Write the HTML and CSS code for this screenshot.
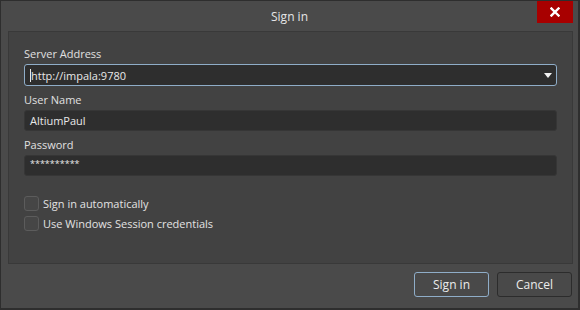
FILE: index.html
```html
<!DOCTYPE html>
<html>
<head>
<meta charset="utf-8">
<link rel="stylesheet" href="styles.css">
</head>
<body>
<div class="window">
  <div class="titlebar">
    <div class="title">Sign in</div>
    <div class="close">
      <svg width="10" height="10" viewBox="0 0 10 10"><path d="M1.5 1.5 L8.5 8.5 M8.5 1.5 L1.5 8.5" stroke="#fff" stroke-width="2.4" stroke-linecap="square"/></svg>
    </div>
  </div>
  <div class="panel">
    <div class="label first">Server Address</div>
    <div class="field combo"><span class="caret"></span><span>http://impala:9780</span><span class="arrow"></span></div>
    <div class="label">User Name</div>
    <div class="field">AltiumPaul</div>
    <div class="label">Password</div>
    <div class="field pwd">**********</div>
    <div class="checks">
      <div class="check"><span class="box"></span><span>Sign in automatically</span></div>
      <div class="check"><span class="box"></span><span>Use Windows Session credentials</span></div>
    </div>
  </div>
  <div class="footer">
    <div class="btn primary">Sign in</div>
    <div class="btn">Cancel</div>
  </div>
</div>
</body>
</html>
```
FILE: styles.css
```css
html, body { margin: 0; padding: 0; background: #2a2a2a; }
body { font-family: "Open Sans", "Noto Sans", sans-serif; font-size: 11px; color: #e2e2e2; }
.window {
  width: 580px; height: 310px; box-sizing: border-box;
  background: #4a4a4a;
  border: 1px solid #2e2e2e;
  border-bottom-width: 2px;
  border-right-width: 2px;
  display: flex; flex-direction: column;
}
.titlebar {
  height: 30px; display: flex; justify-content: center; align-items: flex-start;
  position: relative;
}
.title { margin-top: 7px; font-size: 12px; color: #e6e6e6; }
.close {
  position: absolute; right: 5px; top: 0;
  width: 36px; height: 22px; background: #a80000;
  display: flex; align-items: center; justify-content: center;
}
.close svg { display: block; }
.panel {
  margin: 0 5px 0 7px;
  height: 233px; box-sizing: border-box;
  background: #424242;
  border: 1px solid #393939;
  padding: 14px 15px 0 15px;
  display: flex; flex-direction: column;
}
.label { height: 16px; line-height: 16px; margin-top: 6px; color: #e0e0e0; }
.label.first { margin-top: 0; }
.field {
  margin-top: 2px; height: 21px; box-sizing: border-box;
  background: #2e2e2e; border: 1px solid #363636; border-radius: 3px;
  padding-left: 5px; line-height: 19px; color: #e8e8e8;
  display: flex; align-items: center;
}
.combo {
  height: 22px; border-color: #8fadc8; position: relative;
}
.caret { width: 1px; height: 13px; background: #e8e8e8; margin-right: 0; }
.arrow {
  margin-left: auto; margin-right: 4px;
  width: 0; height: 0;
  border-left: 4px solid transparent; border-right: 4px solid transparent;
  border-top: 5px solid #f2f2f2;
}
.pwd { font-size: 9px; letter-spacing: 0; align-items: flex-start; line-height: 15px; }
.checks { margin-top: 20px; display: flex; flex-direction: column; gap: 5px; }
.check { display: flex; align-items: center; height: 15px; gap: 4px; }
.box {
  width: 15px; height: 15px; box-sizing: border-box;
  border: 1px solid #5c5c5c; border-radius: 3px; background: #464646;
}
.footer {
  display: flex; justify-content: flex-end; gap: 8px;
  padding: 8px 6px 0 0;
}
.btn {
  width: 75px; height: 25px; box-sizing: border-box;
  border: 1px solid #2c2c2c; border-radius: 3px;
  background: #494949; color: #ececec; font-size: 12px;
  display: flex; align-items: center; justify-content: center;
}
.btn.primary { border-color: #8fadc8; }
```
